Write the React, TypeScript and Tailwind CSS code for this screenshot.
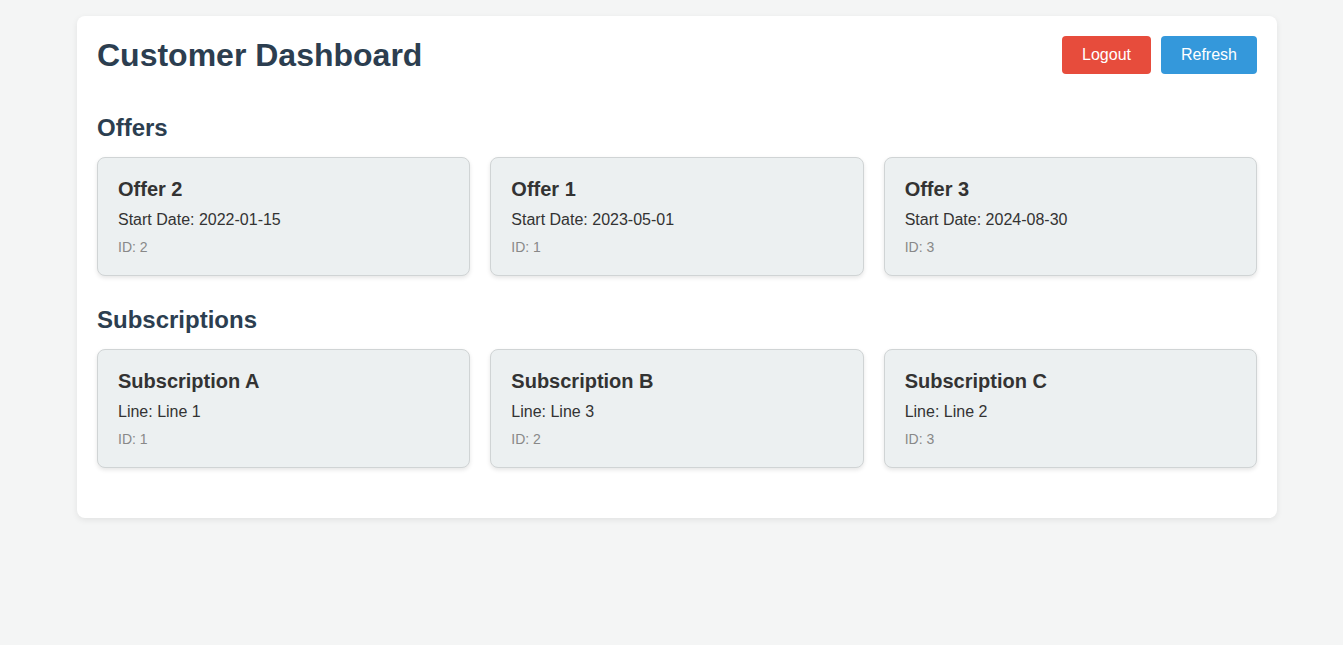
import React from "react";

const offers = [
  { name: "Offer 2", date: "2022-01-15", id: 2 },
  { name: "Offer 1", date: "2023-05-01", id: 1 },
  { name: "Offer 3", date: "2024-08-30", id: 3 },
];
const subs = [
  { name: "Subscription A", line: "Line 1", id: 1 },
  { name: "Subscription B", line: "Line 3", id: 2 },
  { name: "Subscription C", line: "Line 2", id: 3 },
];

function Card({ title, sub, id }: { title: string; sub: string; id: number }) {
  return (
    <div className="bg-[#ecf0f1] border border-[#d0d4d5] rounded-[8px] p-[20px] shadow-[0_2px_4px_rgba(0,0,0,0.1)]">
      <div className="text-[20px] font-bold text-[#333] leading-[23px] mb-[10px]">{title}</div>
      <div className="text-[16px] text-[#333] leading-[18px] mb-[10px]">{sub}</div>
      <div className="text-[14px] text-[#888] leading-[16px]">ID: {id}</div>
    </div>
  );
}

export default function App() {
  return (
    <div className="min-h-[645px] bg-[#f4f5f5] pt-[16px]" style={{ fontFamily: '"Liberation Sans", Arial, sans-serif' }}>
      <div className="w-[1200px] ml-[77px] bg-white rounded-[8px] p-[20px] shadow-[0_2px_6px_rgba(0,0,0,0.08)]">
        <div className="flex items-center justify-between h-[38px] mb-[40px]">
          <h1 className="text-[32px] font-bold text-[#2c3e50] leading-[37px]">Customer Dashboard</h1>
          <div className="flex gap-[10px]">
            <button className="h-[38px] px-[20px] rounded-[4px] bg-[#e74c3c] text-white text-[16px]">Logout</button>
            <button className="h-[38px] px-[20px] rounded-[4px] bg-[#3498db] text-white text-[16px]">Refresh</button>
          </div>
        </div>
        <section className="mb-[30px]">
          <h2 className="text-[24px] font-bold text-[#2c3e50] leading-[28px] mb-[15px]">Offers</h2>
          <div className="grid grid-cols-3 gap-[20px]">
            {offers.map((o) => (
              <Card key={o.name} title={o.name} sub={`Start Date: ${o.date}`} id={o.id} />
            ))}
          </div>
        </section>
        <section className="mb-[30px]">
          <h2 className="text-[24px] font-bold text-[#2c3e50] leading-[28px] mb-[15px]">Subscriptions</h2>
          <div className="grid grid-cols-3 gap-[20px]">
            {subs.map((s) => (
              <Card key={s.name} title={s.name} sub={`Line: ${s.line}`} id={s.id} />
            ))}
          </div>
        </section>
      </div>
    </div>
  );
}
